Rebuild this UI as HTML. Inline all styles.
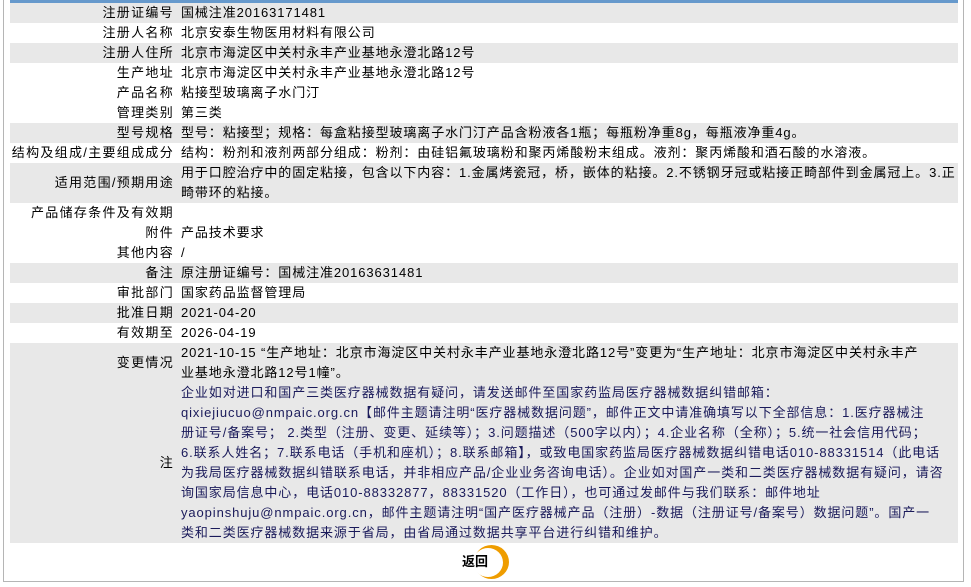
<!DOCTYPE html>
<html><head><meta charset="utf-8">
<style>
*{margin:0;padding:0;box-sizing:border-box}
body{width:971px;height:587px;background:#fff;font-family:"Liberation Sans","Noto Sans CJK SC",sans-serif;font-size:13px;color:#000;position:relative;overflow:hidden}
.frame{position:absolute;left:3px;top:0;width:961px;height:582px;border-left:1px solid #b5b5b5;border-right:1px solid #b5b5b5;border-bottom:1px solid #b5b5b5}
.bar{position:absolute;left:10px;top:0;width:948px;height:3px;background:#6699cc}
table{position:absolute;left:10px;top:3px;width:948px;border-collapse:collapse;table-layout:fixed}
td{line-height:20px;padding:0;vertical-align:middle;letter-spacing:0.9px}
td.l{width:171px;text-align:right;padding-right:7px;white-space:nowrap;letter-spacing:1.3px}
td.v{padding-left:0px;white-space:nowrap}
tr.g td{background:#e8e8e8}
.n{color:#1a1a5a}
.btn{position:absolute;left:462px;top:553px;font-weight:bold;font-size:13px;line-height:18px;z-index:2}
.o{position:absolute;left:474px;top:545px;width:35px;height:34px;border-radius:50%;background:#ef9d00}
.w{position:absolute;left:473px;top:548px;width:30px;height:29px;border-radius:50%;background:#fff}
</style></head><body>
<div class="frame"></div>
<div class="bar"></div>
<table>
<tr class="g"><td class="l">注册证编号</td><td class="v">国械注准20163171481</td></tr>
<tr><td class="l">注册人名称</td><td class="v">北京安泰生物医用材料有限公司</td></tr>
<tr class="g"><td class="l">注册人住所</td><td class="v">北京市海淀区中关村永丰产业基地永澄北路12号</td></tr>
<tr><td class="l">生产地址</td><td class="v">北京市海淀区中关村永丰产业基地永澄北路12号</td></tr>
<tr><td class="l">产品名称</td><td class="v">粘接型玻璃离子水门汀</td></tr>
<tr><td class="l">管理类别</td><td class="v">第三类</td></tr>
<tr class="g"><td class="l">型号规格</td><td class="v">型号：粘接型；规格：每盒粘接型玻璃离子水门汀产品含粉液各1瓶；每瓶粉净重8g，每瓶液净重4g。</td></tr>
<tr><td class="l">结构及组成/主要组成成分</td><td class="v">结构：粉剂和液剂两部分组成：粉剂：由硅铝氟玻璃粉和聚丙烯酸粉末组成。液剂：聚丙烯酸和酒石酸的水溶液。</td></tr>
<tr class="g"><td class="l">适用范围/预期用途</td><td class="v">用于口腔治疗中的固定粘接，包含以下内容：1.金属烤瓷冠，桥，嵌体的粘接。2.不锈钢牙冠或粘接正畸部件到金属冠上。3.正<br>畸带环的粘接。</td></tr>
<tr><td class="l">产品储存条件及有效期</td><td class="v"></td></tr>
<tr><td class="l">附件</td><td class="v">产品技术要求</td></tr>
<tr><td class="l">其他内容</td><td class="v">/</td></tr>
<tr class="g"><td class="l">备注</td><td class="v">原注册证编号：国械注准20163631481</td></tr>
<tr><td class="l">审批部门</td><td class="v">国家药品监督管理局</td></tr>
<tr class="g"><td class="l">批准日期</td><td class="v">2021-04-20</td></tr>
<tr><td class="l">有效期至</td><td class="v">2026-04-19</td></tr>
<tr class="g"><td class="l">变更情况</td><td class="v">2021-10-15 “生产地址：北京市海淀区中关村永丰产业基地永澄北路12号”变更为“生产地址：北京市海淀区中关村永丰产<br>业基地永澄北路12号1幢”。</td></tr>
<tr class="g"><td class="l">注</td><td class="v n">企业如对进口和国产三类医疗器械数据有疑问，请发送邮件至国家药监局医疗器械数据纠错邮箱：<br>qixiejiucuo@nmpaic.org.cn【邮件主题请注明“医疗器械数据问题”，邮件正文中请准确填写以下全部信息：1.医疗器械注<br>册证号/备案号； 2.类型（注册、变更、延续等）；3.问题描述（500字以内）；4.企业名称（全称）；5.统一社会信用代码；<br>6.联系人姓名；7.联系电话（手机和座机）；8.联系邮箱】，或致电国家药监局医疗器械数据纠错电话010-88331514（此电话<br>为我局医疗器械数据纠错联系电话，并非相应产品/企业业务咨询电话）。企业如对国产一类和二类医疗器械数据有疑问，请咨<br>询国家局信息中心，电话010-88332877，88331520（工作日），也可通过发邮件与我们联系：邮件地址<br>yaopinshuju@nmpaic.org.cn，邮件主题请注明“国产医疗器械产品（注册）-数据（注册证号/备案号）数据问题”。国产一<br>类和二类医疗器械数据来源于省局，由省局通过数据共享平台进行纠错和维护。</td></tr>
</table>
<div class="o"></div><div class="w"></div>
<div class="btn">返回</div>
</body></html>
